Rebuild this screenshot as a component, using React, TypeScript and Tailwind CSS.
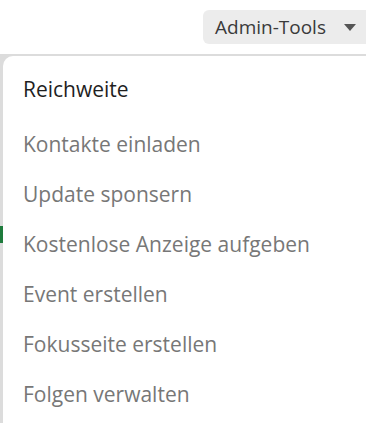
import React from "react";

const items = [
  "Kontakte einladen",
  "Update sponsern",
  "Kostenlose Anzeige aufgeben",
  "Event erstellen",
  "Fokusseite erstellen",
  "Folgen verwalten",
];

export default function App() {
  return (
    <div
      className="w-[366px] h-[423px] bg-white flex flex-col overflow-hidden"
      style={{ fontFamily: '"Open Sans", "Noto Sans", sans-serif' }}
    >
      <div className="h-[54px] shrink-0 flex items-start justify-end pt-[10px]">
        <button className="h-[34px] w-[163px] bg-[#ececec] rounded-l-[6px] flex items-center pl-[12px] text-[19px] text-[#3a3a3a]">
          <span>Admin-Tools</span>
          <svg className="ml-[18px]" width="12" height="7" viewBox="0 0 12 7">
            <path d="M0 0 L12 0 L6 7 Z" fill="#555" />
          </svg>
        </button>
      </div>
      <div className="flex-1 flex bg-[#dcdcdc] pt-[2px]">
        <div className="w-[3px] shrink-0 flex flex-col">
          <div className="h-[170px]" />
          <div className="h-[17px] bg-[#1e7b3c]" />
        </div>
        <div className="flex-1 bg-white rounded-tl-[10px] pl-[20px] pt-[10px]">
          <div className="h-[50px] pb-[2px] flex items-center text-[21px] font-medium text-[#1f1f1f]">
            Reichweite
          </div>
          <div className="flex flex-col mt-[4px]">
            {items.map((t) => (
              <div key={t} className="h-[50px] flex items-center text-[21px] font-medium text-[#777777]">
                {t}
              </div>
            ))}
          </div>
        </div>
      </div>
    </div>
  );
}
